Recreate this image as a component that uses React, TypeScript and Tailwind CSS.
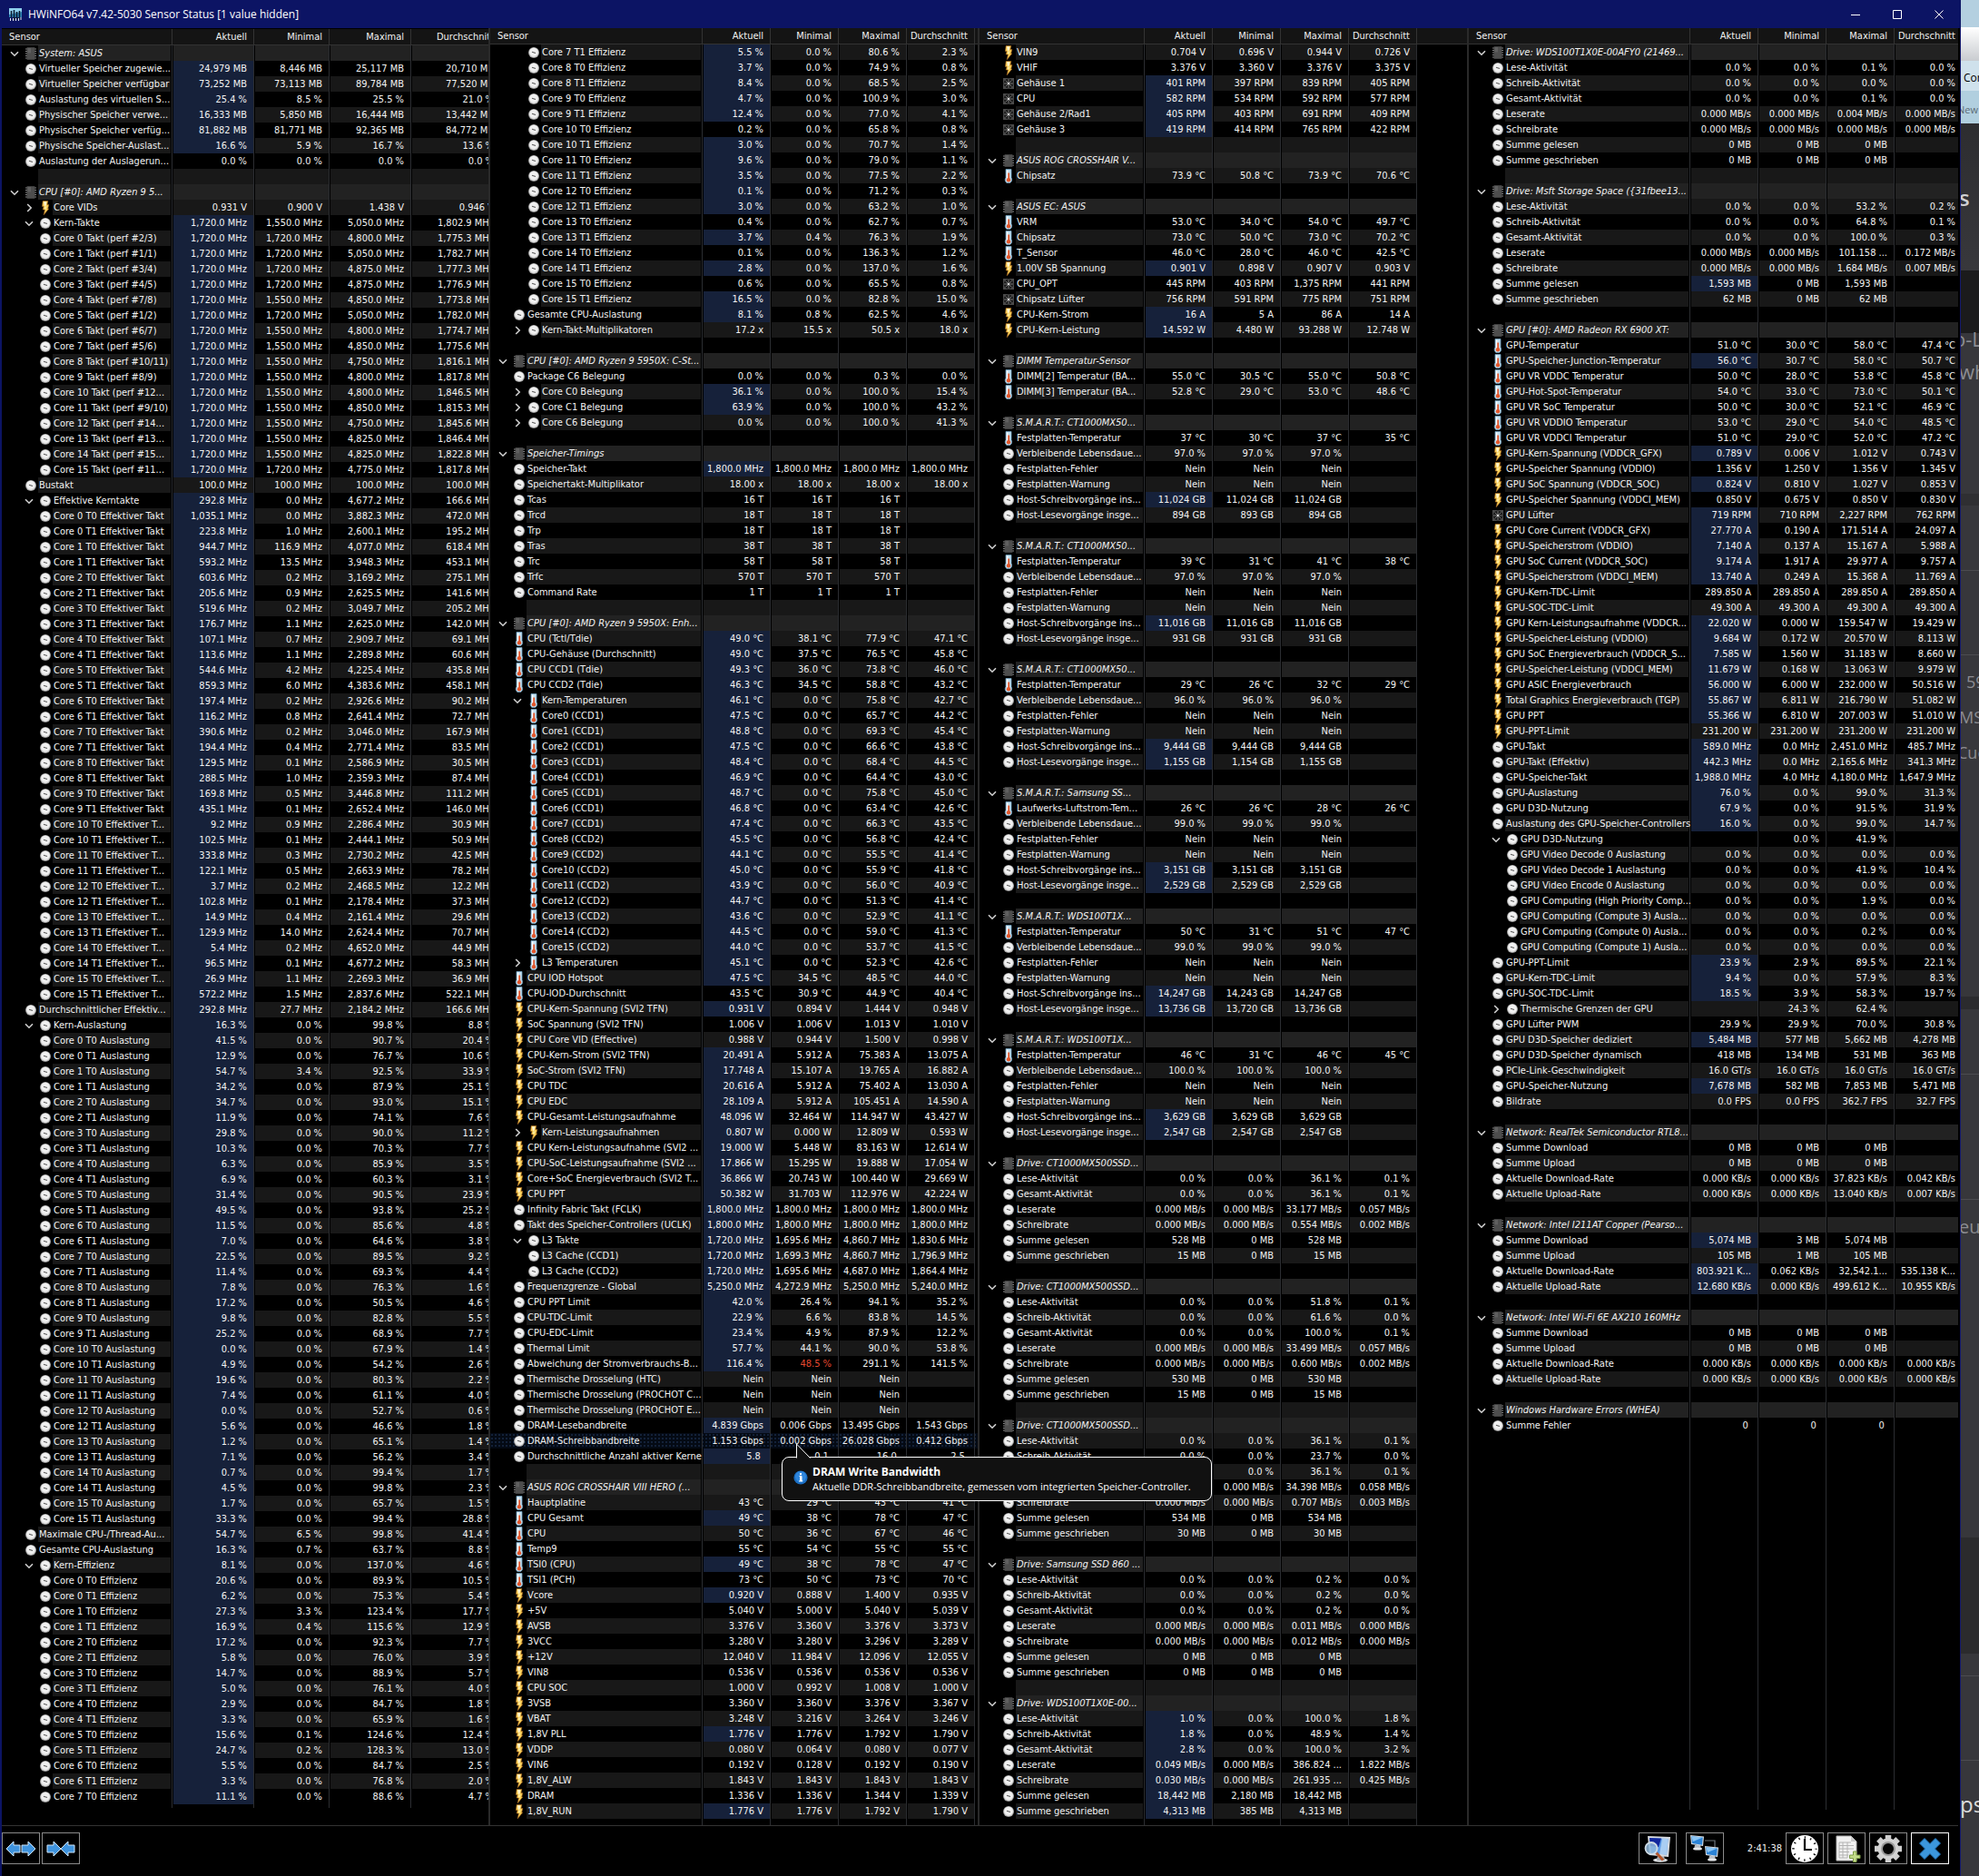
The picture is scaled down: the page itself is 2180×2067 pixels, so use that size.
import { clsx } from "clsx";
import type { ReactNode } from "react";

// ── Sensor data ────────────────────────────────────────────────────────────
//
// One line per row: kind + level + expander | name | unit | current | min | max | avg
//   kind      h = group, g = gauge, t = temperature, b = power, f = fan
//   expander  v = open, > = closed
//   value     leading * = changed since last poll, leading ! = alert
// An empty line is a spacer row.

const SYSTEM = `
h0v|System: ASUS
g0|Virtueller Speicher zugewie...|MB|*24,979|8,446|25,117|20,710
g0|Virtueller Speicher verfügbar|MB|*73,252|73,113|89,784|77,520
g0|Auslastung des virtuellen S...|%|*25.4|8.5|25.5|21.0
g0|Physischer Speicher verwe...|MB|*16,333|5,850|16,444|13,442
g0|Physischer Speicher verfüg...|MB|*81,882|81,771|92,365|84,772
g0|Physische Speicher-Auslast...|%|*16.6|5.9|16.7|13.6
g0|Auslastung der Auslagerun...|%|0.0|0.0|0.0|0.0

h0v|CPU [#0]: AMD Ryzen 9 5...
b1>|Core VIDs|V|0.931|0.900|1.438|0.946
g1v|Kern-Takte|MHz|*1,720.0|1,550.0|5,050.0|1,802.9
g1|Core 0 Takt (perf #2/3)|MHz|*1,720.0|1,720.0|4,800.0|1,775.3
g1|Core 1 Takt (perf #1/1)|MHz|*1,720.0|1,720.0|5,050.0|1,782.7
g1|Core 2 Takt (perf #3/4)|MHz|*1,720.0|1,720.0|4,875.0|1,777.3
g1|Core 3 Takt (perf #4/5)|MHz|*1,720.0|1,720.0|4,875.0|1,776.9
g1|Core 4 Takt (perf #7/8)|MHz|*1,720.0|1,550.0|4,850.0|1,773.8
g1|Core 5 Takt (perf #1/2)|MHz|*1,720.0|1,720.0|5,050.0|1,782.0
g1|Core 6 Takt (perf #6/7)|MHz|*1,720.0|1,550.0|4,800.0|1,774.7
g1|Core 7 Takt (perf #5/6)|MHz|*1,720.0|1,550.0|4,850.0|1,775.6
g1|Core 8 Takt (perf #10/11)|MHz|*1,720.0|1,550.0|4,750.0|1,816.1
g1|Core 9 Takt (perf #8/9)|MHz|*1,720.0|1,550.0|4,800.0|1,817.8
g1|Core 10 Takt (perf #12...|MHz|*1,720.0|1,550.0|4,800.0|1,846.5
g1|Core 11 Takt (perf #9/10)|MHz|*1,720.0|1,550.0|4,850.0|1,815.3
g1|Core 12 Takt (perf #14...|MHz|*1,720.0|1,550.0|4,750.0|1,845.6
g1|Core 13 Takt (perf #13...|MHz|*1,720.0|1,550.0|4,825.0|1,846.4
g1|Core 14 Takt (perf #15...|MHz|*1,720.0|1,550.0|4,825.0|1,822.8
g1|Core 15 Takt (perf #11...|MHz|*1,720.0|1,720.0|4,775.0|1,817.8
g0|Bustakt|MHz|100.0|100.0|100.0|100.0
g1v|Effektive Kerntakte|MHz|*292.8|0.0|4,677.2|166.6
g1|Core 0 T0 Effektiver Takt|MHz|*1,035.1|0.0|3,882.3|472.0
g1|Core 0 T1 Effektiver Takt|MHz|*223.8|1.0|2,600.1|195.2
g1|Core 1 T0 Effektiver Takt|MHz|*944.7|116.9|4,077.0|618.4
g1|Core 1 T1 Effektiver Takt|MHz|*593.2|13.5|3,948.3|453.1
g1|Core 2 T0 Effektiver Takt|MHz|*603.6|0.2|3,169.2|275.1
g1|Core 2 T1 Effektiver Takt|MHz|*205.6|0.9|2,625.5|141.6
g1|Core 3 T0 Effektiver Takt|MHz|*519.6|0.2|3,049.7|205.2
g1|Core 3 T1 Effektiver Takt|MHz|*176.7|1.1|2,625.0|142.0
g1|Core 4 T0 Effektiver Takt|MHz|*107.1|0.7|2,909.7|69.1
g1|Core 4 T1 Effektiver Takt|MHz|*113.6|1.1|2,289.8|60.6
g1|Core 5 T0 Effektiver Takt|MHz|*544.6|4.2|4,225.4|435.8
g1|Core 5 T1 Effektiver Takt|MHz|*859.3|6.0|4,383.6|458.1
g1|Core 6 T0 Effektiver Takt|MHz|*197.4|0.2|2,926.6|90.2
g1|Core 6 T1 Effektiver Takt|MHz|*116.2|0.8|2,641.4|72.7
g1|Core 7 T0 Effektiver Takt|MHz|*390.6|0.2|3,046.0|167.9
g1|Core 7 T1 Effektiver Takt|MHz|*194.4|0.4|2,771.4|83.5
g1|Core 8 T0 Effektiver Takt|MHz|*129.5|0.1|2,586.9|30.5
g1|Core 8 T1 Effektiver Takt|MHz|*288.5|1.0|2,359.3|87.4
g1|Core 9 T0 Effektiver Takt|MHz|*169.8|0.5|3,446.8|111.2
g1|Core 9 T1 Effektiver Takt|MHz|*435.1|0.1|2,652.4|146.0
g1|Core 10 T0 Effektiver T...|MHz|*9.2|0.9|2,286.4|30.9
g1|Core 10 T1 Effektiver T...|MHz|*102.5|0.1|2,444.1|50.9
g1|Core 11 T0 Effektiver T...|MHz|*333.8|0.3|2,730.2|42.5
g1|Core 11 T1 Effektiver T...|MHz|*122.1|0.5|2,663.9|78.2
g1|Core 12 T0 Effektiver T...|MHz|*3.7|0.2|2,468.5|12.2
g1|Core 12 T1 Effektiver T...|MHz|*102.8|0.1|2,178.4|37.3
g1|Core 13 T0 Effektiver T...|MHz|*14.9|0.4|2,161.4|29.6
g1|Core 13 T1 Effektiver T...|MHz|*129.9|14.0|2,624.4|70.7
g1|Core 14 T0 Effektiver T...|MHz|*5.4|0.2|4,652.0|44.9
g1|Core 14 T1 Effektiver T...|MHz|*96.5|0.1|4,677.2|58.3
g1|Core 15 T0 Effektiver T...|MHz|*26.9|1.1|2,269.3|36.9
g1|Core 15 T1 Effektiver T...|MHz|*572.2|1.5|2,837.6|522.1
g0|Durchschnittlicher Effektiv...|MHz|*292.8|27.7|2,184.2|166.6
g1v|Kern-Auslastung|%|*16.3|0.0|99.8|8.8
g1|Core 0 T0 Auslastung|%|*41.5|0.0|90.7|20.4
g1|Core 0 T1 Auslastung|%|*12.9|0.0|76.7|10.6
g1|Core 1 T0 Auslastung|%|*54.7|3.4|92.5|33.9
g1|Core 1 T1 Auslastung|%|*34.2|0.0|87.9|25.1
g1|Core 2 T0 Auslastung|%|*34.7|0.0|93.0|15.1
g1|Core 2 T1 Auslastung|%|*11.9|0.0|74.1|7.6
g1|Core 3 T0 Auslastung|%|*29.8|0.0|90.0|11.2
g1|Core 3 T1 Auslastung|%|*10.3|0.0|70.3|7.7
g1|Core 4 T0 Auslastung|%|*6.3|0.0|85.9|3.5
g1|Core 4 T1 Auslastung|%|*6.9|0.0|60.3|3.1
g1|Core 5 T0 Auslastung|%|*31.4|0.0|90.5|23.9
g1|Core 5 T1 Auslastung|%|*49.5|0.0|93.8|25.2
g1|Core 6 T0 Auslastung|%|*11.5|0.0|85.6|4.8
g1|Core 6 T1 Auslastung|%|*7.0|0.0|64.6|3.8
g1|Core 7 T0 Auslastung|%|*22.5|0.0|89.5|9.2
g1|Core 7 T1 Auslastung|%|*11.4|0.0|69.3|4.4
g1|Core 8 T0 Auslastung|%|*7.8|0.0|76.3|1.6
g1|Core 8 T1 Auslastung|%|*17.2|0.0|50.5|4.6
g1|Core 9 T0 Auslastung|%|*9.8|0.0|82.8|5.5
g1|Core 9 T1 Auslastung|%|*25.2|0.0|68.9|7.7
g1|Core 10 T0 Auslastung|%|*0.0|0.0|67.9|1.4
g1|Core 10 T1 Auslastung|%|*4.9|0.0|54.2|2.6
g1|Core 11 T0 Auslastung|%|*19.6|0.0|80.3|2.2
g1|Core 11 T1 Auslastung|%|*7.4|0.0|61.1|4.0
g1|Core 12 T0 Auslastung|%|*0.0|0.0|52.7|0.6
g1|Core 12 T1 Auslastung|%|*5.6|0.0|46.6|1.8
g1|Core 13 T0 Auslastung|%|*1.2|0.0|65.1|1.4
g1|Core 13 T1 Auslastung|%|*7.1|0.0|56.2|3.4
g1|Core 14 T0 Auslastung|%|*0.7|0.0|99.4|1.7
g1|Core 14 T1 Auslastung|%|*4.5|0.0|99.8|2.3
g1|Core 15 T0 Auslastung|%|*1.7|0.0|65.7|1.5
g1|Core 15 T1 Auslastung|%|*33.3|0.0|99.4|28.8
g0|Maximale CPU-/Thread-Au...|%|*54.7|6.5|99.8|41.4
g0|Gesamte CPU-Auslastung|%|*16.3|0.7|63.7|8.8
g1v|Kern-Effizienz|%|*8.1|0.0|137.0|4.6
g1|Core 0 T0 Effizienz|%|*20.6|0.0|89.9|10.5
g1|Core 0 T1 Effizienz|%|*6.2|0.0|75.3|5.4
g1|Core 1 T0 Effizienz|%|*27.3|3.3|123.4|17.7
g1|Core 1 T1 Effizienz|%|*16.9|0.4|115.6|12.9
g1|Core 2 T0 Effizienz|%|*17.2|0.0|92.3|7.7
g1|Core 2 T1 Effizienz|%|*5.8|0.0|76.0|3.9
g1|Core 3 T0 Effizienz|%|*14.7|0.0|88.9|5.7
g1|Core 3 T1 Effizienz|%|*5.0|0.0|76.1|4.0
g1|Core 4 T0 Effizienz|%|*2.9|0.0|84.7|1.8
g1|Core 4 T1 Effizienz|%|*3.3|0.0|65.9|1.6
g1|Core 5 T0 Effizienz|%|*15.6|0.1|124.6|12.4
g1|Core 5 T1 Effizienz|%|*24.7|0.2|128.3|13.0
g1|Core 6 T0 Effizienz|%|*5.5|0.0|84.7|2.5
g1|Core 6 T1 Effizienz|%|*3.3|0.0|76.8|2.0
g1|Core 7 T0 Effizienz|%|*11.1|0.0|88.6|4.7
`;

const CPU = `
g1|Core 7 T1 Effizienz|%|*5.5|0.0|80.6|2.3
g1|Core 8 T0 Effizienz|%|*3.7|0.0|74.9|0.8
g1|Core 8 T1 Effizienz|%|*8.4|0.0|68.5|2.5
g1|Core 9 T0 Effizienz|%|*4.7|0.0|100.9|3.0
g1|Core 9 T1 Effizienz|%|*12.4|0.0|77.0|4.1
g1|Core 10 T0 Effizienz|%|0.2|0.0|65.8|0.8
g1|Core 10 T1 Effizienz|%|*3.0|0.0|70.7|1.4
g1|Core 11 T0 Effizienz|%|*9.6|0.0|79.0|1.1
g1|Core 11 T1 Effizienz|%|*3.5|0.0|77.5|2.2
g1|Core 12 T0 Effizienz|%|*0.1|0.0|71.2|0.3
g1|Core 12 T1 Effizienz|%|*3.0|0.0|63.2|1.0
g1|Core 13 T0 Effizienz|%|0.4|0.0|62.7|0.7
g1|Core 13 T1 Effizienz|%|*3.7|0.4|76.3|1.9
g1|Core 14 T0 Effizienz|%|0.1|0.0|136.3|1.2
g1|Core 14 T1 Effizienz|%|*2.8|0.0|137.0|1.6
g1|Core 15 T0 Effizienz|%|0.6|0.0|65.5|0.8
g1|Core 15 T1 Effizienz|%|*16.5|0.0|82.8|15.0
g0|Gesamte CPU-Auslastung|%|*8.1|0.8|62.5|4.6
g1>|Kern-Takt-Multiplikatoren|x|17.2|15.5|50.5|18.0

h0v|CPU [#0]: AMD Ryzen 9 5950X: C-St...
g0|Package C6 Belegung|%|0.0|0.0|0.3|0.0
g1>|Core C0 Belegung|%|*36.1|0.0|100.0|15.4
g1>|Core C1 Belegung|%|*63.9|0.0|100.0|43.2
g1>|Core C6 Belegung|%|0.0|0.0|100.0|41.3

h0v|Speicher-Timings
g0|Speicher-Takt|MHz|*1,800.0|1,800.0|1,800.0|1,800.0
g0|Speichertakt-Multiplikator|x|18.00|18.00|18.00|18.00
g0|Tcas|T|16|16|16|
g0|Trcd|T|18|18|18|
g0|Trp|T|18|18|18|
g0|Tras|T|38|38|38|
g0|Trc|T|58|58|58|
g0|Trfc|T|570|570|570|
g0|Command Rate|T|1|1|1|

h0v|CPU [#0]: AMD Ryzen 9 5950X: Enh...
t0|CPU (Tctl/Tdie)|°C|*49.0|38.1|77.9|47.1
t0|CPU-Gehäuse (Durchschnitt)|°C|*49.0|37.5|76.5|45.8
t0|CPU CCD1 (Tdie)|°C|*49.3|36.0|73.8|46.0
t0|CPU CCD2 (Tdie)|°C|*46.3|34.5|58.8|43.2
t1v|Kern-Temperaturen|°C|*46.1|0.0|75.8|42.7
t1|Core0 (CCD1)|°C|*47.5|0.0|65.7|44.2
t1|Core1 (CCD1)|°C|*48.8|0.0|69.3|45.4
t1|Core2 (CCD1)|°C|*47.5|0.0|66.6|43.8
t1|Core3 (CCD1)|°C|*48.4|0.0|68.4|44.5
t1|Core4 (CCD1)|°C|*46.9|0.0|64.4|43.0
t1|Core5 (CCD1)|°C|*48.7|0.0|75.8|45.0
t1|Core6 (CCD1)|°C|*46.8|0.0|63.4|42.6
t1|Core7 (CCD1)|°C|*47.4|0.0|66.3|43.5
t1|Core8 (CCD2)|°C|*45.5|0.0|56.8|42.4
t1|Core9 (CCD2)|°C|*44.1|0.0|55.5|41.4
t1|Core10 (CCD2)|°C|*45.0|0.0|55.9|41.8
t1|Core11 (CCD2)|°C|*43.9|0.0|56.0|40.9
t1|Core12 (CCD2)|°C|*44.7|0.0|51.3|41.4
t1|Core13 (CCD2)|°C|*43.6|0.0|52.9|41.1
t1|Core14 (CCD2)|°C|*44.5|0.0|59.0|41.3
t1|Core15 (CCD2)|°C|*44.0|0.0|53.7|41.5
t1>|L3 Temperaturen|°C|*45.1|0.0|52.3|42.6
t0|CPU IOD Hotspot|°C|*47.5|34.5|48.5|44.0
t0|CPU-IOD-Durchschnitt|°C|43.5|30.9|44.9|40.4
b0|CPU-Kern-Spannung (SVI2 TFN)|V|*0.931|0.894|1.444|0.948
b0|SoC Spannung (SVI2 TFN)|V|1.006|1.006|1.013|1.010
b0|CPU Core VID (Effective)|V|0.988|0.944|1.500|0.998
b0|CPU-Kern-Strom (SVI2 TFN)|A|*20.491|5.912|75.383|13.075
b0|SoC-Strom (SVI2 TFN)|A|*17.748|15.107|19.765|16.882
b0|CPU TDC|A|*20.616|5.912|75.402|13.030
b0|CPU EDC|A|*28.109|5.912|105.451|14.590
b0|CPU-Gesamt-Leistungsaufnahme|W|*48.096|32.464|114.947|43.427
b1>|Kern-Leistungsaufnahmen|W|*0.807|0.000|12.809|0.593
b0|CPU Kern-Leistungsaufnahme (SVI2 ...|W|*19.000|5.448|83.163|12.614
b0|CPU-SoC-Leistungsaufnahme (SVI2 ...|W|*17.866|15.295|19.888|17.054
b0|Core+SoC Energieverbrauch (SVI2 T...|W|*36.866|20.743|100.440|29.669
b0|CPU PPT|W|*50.382|31.703|112.976|42.224
g0|Infinity Fabric Takt (FCLK)|MHz|*1,800.0|1,800.0|1,800.0|1,800.0
g0|Takt des Speicher-Controllers (UCLK)|MHz|*1,800.0|1,800.0|1,800.0|1,800.0
g1v|L3 Takte|MHz|*1,720.0|1,695.6|4,860.7|1,830.6
g1|L3 Cache (CCD1)|MHz|*1,720.0|1,699.3|4,860.7|1,796.9
g1|L3 Cache (CCD2)|MHz|*1,720.0|1,695.6|4,687.0|1,864.4
g0|Frequenzgrenze - Global|MHz|*5,250.0|4,272.9|5,250.0|5,240.0
g0|CPU PPT Limit|%|*42.0|26.4|94.1|35.2
g0|CPU-TDC-Limit|%|*22.9|6.6|83.8|14.5
g0|CPU-EDC-Limit|%|*23.4|4.9|87.9|12.2
g0|Thermal Limit|%|*57.7|44.1|90.0|53.8
g0|Abweichung der Stromverbrauchs-B...|%|*116.4|!48.5|291.1|141.5
g0|Thermische Drosselung (HTC)||Nein|Nein|Nein|
g0|Thermische Drosselung (PROCHOT C...||Nein|Nein|Nein|
g0|Thermische Drosselung (PROCHOT E...||Nein|Nein|Nein|
g0|DRAM-Lesebandbreite|Gbps|*4.839|0.006|13.495|1.543
g0|DRAM-Schreibbandbreite|Gbps|1.153|0.002|26.028|0.412
g0|Durchschnittliche Anzahl aktiver Kerne| |*5.8|0.1|16.0|2.5

h0v|ASUS ROG CROSSHAIR VIII HERO (...
t0|Hauptplatine|°C|43|29|43|41
t0|CPU Gesamt|°C|*49|38|78|47
t0|CPU|°C|50|36|67|46
t0|Temp9|°C|55|54|55|55
t0|TSI0 (CPU)|°C|*49|38|78|47
t0|TSI1 (PCH)|°C|73|50|73|70
b0|Vcore|V|*0.920|0.888|1.400|0.935
b0|+5V|V|5.040|5.000|5.040|5.039
b0|AVSB|V|3.376|3.360|3.376|3.373
b0|3VCC|V|3.280|3.280|3.296|3.289
b0|+12V|V|12.040|11.984|12.096|12.055
b0|VIN8|V|0.536|0.536|0.536|0.536
b0|CPU SOC|V|1.000|0.992|1.008|1.000
b0|3VSB|V|3.360|3.360|3.376|3.367
b0|VBAT|V|3.248|3.216|3.264|3.246
b0|1,8V PLL|V|*1.776|1.776|1.792|1.790
b0|VDDP|V|0.080|0.064|0.080|0.077
b0|VIN6|V|0.192|0.128|0.192|0.190
b0|1,8V_ALW|V|1.843|1.843|1.843|1.843
b0|DRAM|V|1.336|1.336|1.344|1.339
b0|1,8V_RUN|V|*1.776|1.776|1.792|1.790
`;

const BOARD = `
b0|VIN9|V|0.704|0.696|0.944|0.726
b0|VHIF|V|3.376|3.360|3.376|3.375
f0|Gehäuse 1|RPM|*401|397|839|405
f0|CPU|RPM|*582|534|592|577
f0|Gehäuse 2/Rad1|RPM|*405|403|691|409
f0|Gehäuse 3|RPM|*419|414|765|422

h0v|ASUS ROG CROSSHAIR V...
t0|Chipsatz|°C|73.9|50.8|73.9|70.6

h0v|ASUS EC: ASUS
t0|VRM|°C|53.0|34.0|54.0|49.7
t0|Chipsatz|°C|73.0|50.0|73.0|70.2
t0|T_Sensor|°C|46.0|28.0|46.0|42.5
b0|1.00V SB Spannung|V|*0.901|0.898|0.907|0.903
f0|CPU_OPT|RPM|445|403|1,375|441
f0|Chipsatz Lüfter|RPM|756|591|775|751
b0|CPU-Kern-Strom|A|*16|5|86|14
b0|CPU-Kern-Leistung|W|*14.592|4.480|93.288|12.748

h0v|DIMM Temperatur-Sensor
t0|DIMM[2] Temperatur (BA...|°C|55.0|30.5|55.0|50.8
t0|DIMM[3] Temperatur (BA...|°C|52.8|29.0|53.0|48.6

h0v|S.M.A.R.T.: CT1000MX50...
t0|Festplatten-Temperatur|°C|37|30|37|35
g0|Verbleibende Lebensdaue...|%|97.0|97.0|97.0|
g0|Festplatten-Fehler||Nein|Nein|Nein|
g0|Festplatten-Warnung||Nein|Nein|Nein|
g0|Host-Schreibvorgänge ins...|GB|*11,024|11,024|11,024|
g0|Host-Lesevorgänge insge...|GB|894|893|894|

h0v|S.M.A.R.T.: CT1000MX50...
t0|Festplatten-Temperatur|°C|39|31|41|38
g0|Verbleibende Lebensdaue...|%|97.0|97.0|97.0|
g0|Festplatten-Fehler||Nein|Nein|Nein|
g0|Festplatten-Warnung||Nein|Nein|Nein|
g0|Host-Schreibvorgänge ins...|GB|*11,016|11,016|11,016|
g0|Host-Lesevorgänge insge...|GB|931|931|931|

h0v|S.M.A.R.T.: CT1000MX50...
t0|Festplatten-Temperatur|°C|29|26|32|29
g0|Verbleibende Lebensdaue...|%|96.0|96.0|96.0|
g0|Festplatten-Fehler||Nein|Nein|Nein|
g0|Festplatten-Warnung||Nein|Nein|Nein|
g0|Host-Schreibvorgänge ins...|GB|*9,444|9,444|9,444|
g0|Host-Lesevorgänge insge...|GB|*1,155|1,154|1,155|

h0v|S.M.A.R.T.: Samsung SS...
t0|Laufwerks-Luftstrom-Tem...|°C|26|26|28|26
g0|Verbleibende Lebensdaue...|%|99.0|99.0|99.0|
g0|Festplatten-Fehler||Nein|Nein|Nein|
g0|Festplatten-Warnung||Nein|Nein|Nein|
g0|Host-Schreibvorgänge ins...|GB|*3,151|3,151|3,151|
g0|Host-Lesevorgänge insge...|GB|*2,529|2,529|2,529|

h0v|S.M.A.R.T.: WDS100T1X...
t0|Festplatten-Temperatur|°C|50|31|51|47
g0|Verbleibende Lebensdaue...|%|99.0|99.0|99.0|
g0|Festplatten-Fehler||Nein|Nein|Nein|
g0|Festplatten-Warnung||Nein|Nein|Nein|
g0|Host-Schreibvorgänge ins...|GB|*14,247|14,243|14,247|
g0|Host-Lesevorgänge insge...|GB|*13,736|13,720|13,736|

h0v|S.M.A.R.T.: WDS100T1X...
t0|Festplatten-Temperatur|°C|46|31|46|45
g0|Verbleibende Lebensdaue...|%|100.0|100.0|100.0|
g0|Festplatten-Fehler||Nein|Nein|Nein|
g0|Festplatten-Warnung||Nein|Nein|Nein|
g0|Host-Schreibvorgänge ins...|GB|*3,629|3,629|3,629|
g0|Host-Lesevorgänge insge...|GB|*2,547|2,547|2,547|

h0v|Drive: CT1000MX500SSD...
g0|Lese-Aktivität|%|0.0|0.0|36.1|0.1
g0|Gesamt-Aktivität|%|0.0|0.0|36.1|0.1
g0|Leserate|MB/s|0.000|0.000|33.177|0.057
g0|Schreibrate|MB/s|0.000|0.000|0.554|0.002
g0|Summe gelesen|MB|528|0|528|
g0|Summe geschrieben|MB|15|0|15|

h0v|Drive: CT1000MX500SSD...
g0|Lese-Aktivität|%|0.0|0.0|51.8|0.1
g0|Schreib-Aktivität|%|0.0|0.0|61.6|0.0
g0|Gesamt-Aktivität|%|0.0|0.0|100.0|0.1
g0|Leserate|MB/s|0.000|0.000|33.499|0.057
g0|Schreibrate|MB/s|0.000|0.000|0.600|0.002
g0|Summe gelesen|MB|530|0|530|
g0|Summe geschrieben|MB|15|0|15|

h0v|Drive: CT1000MX500SSD...
g0|Lese-Aktivität|%|0.0|0.0|36.1|0.1
g0|Schreib-Aktivität|%|0.0|0.0|23.7|0.0
g0|Gesamt-Aktivität|%|0.0|0.0|36.1|0.1
g0|Leserate|MB/s|0.000|0.000|34.398|0.058
g0|Schreibrate|MB/s|0.000|0.000|0.707|0.003
g0|Summe gelesen|MB|534|0|534|
g0|Summe geschrieben|MB|30|0|30|

h0v|Drive: Samsung SSD 860 ...
g0|Lese-Aktivität|%|0.0|0.0|0.2|0.0
g0|Schreib-Aktivität|%|0.0|0.0|0.2|0.0
g0|Gesamt-Aktivität|%|0.0|0.0|0.2|0.0
g0|Leserate|MB/s|0.000|0.000|0.011|0.000
g0|Schreibrate|MB/s|0.000|0.000|0.012|0.000
g0|Summe gelesen|MB|0|0|0|
g0|Summe geschrieben|MB|0|0|0|

h0v|Drive: WDS100T1X0E-00...
g0|Lese-Aktivität|%|*1.0|0.0|100.0|1.8
g0|Schreib-Aktivität|%|*1.8|0.0|48.9|1.4
g0|Gesamt-Aktivität|%|*2.8|0.0|100.0|3.2
g0|Leserate|MB/s|*0.049|0.000|386.824 ...|1.822
g0|Schreibrate|MB/s|*0.030|0.000|261.935 ...|0.425
g0|Summe gelesen|MB|*18,442|2,180|18,442|
g0|Summe geschrieben|MB|*4,313|385|4,313|
`;

const GPU = `
h0v|Drive: WDS100T1X0E-00AFY0 (21469...
g0|Lese-Aktivität|%|0.0|0.0|0.1|0.0
g0|Schreib-Aktivität|%|0.0|0.0|0.0|0.0
g0|Gesamt-Aktivität|%|0.0|0.0|0.1|0.0
g0|Leserate|MB/s|0.000|0.000|0.004|0.000
g0|Schreibrate|MB/s|0.000|0.000|0.000|0.000
g0|Summe gelesen|MB|0|0|0|
g0|Summe geschrieben|MB|0|0|0|

h0v|Drive: Msft Storage Space ({31fbee13...
g0|Lese-Aktivität|%|0.0|0.0|53.2|0.2
g0|Schreib-Aktivität|%|0.0|0.0|64.8|0.1
g0|Gesamt-Aktivität|%|0.0|0.0|100.0|0.3
g0|Leserate|MB/s|0.000|0.000|101.158 ...|0.172
g0|Schreibrate|MB/s|0.000|0.000|1.684|0.007
g0|Summe gelesen|MB|*1,593|0|1,593|
g0|Summe geschrieben|MB|62|0|62|

h0v|GPU [#0]: AMD Radeon RX 6900 XT:
t0|GPU-Temperatur|°C|51.0|30.0|58.0|47.4
t0|GPU-Speicher-Junction-Temperatur|°C|*56.0|30.7|58.0|50.7
t0|GPU VR VDDC Temperatur|°C|50.0|28.0|53.8|45.8
t0|GPU-Hot-Spot-Temperatur|°C|54.0|33.0|73.0|50.1
t0|GPU VR SoC Temperatur|°C|50.0|30.0|52.1|46.9
t0|GPU VR VDDIO Temperatur|°C|53.0|29.0|54.0|48.5
t0|GPU VR VDDCI Temperatur|°C|51.0|29.0|52.0|47.2
b0|GPU-Kern-Spannung (VDDCR_GFX)|V|*0.789|0.006|1.012|0.743
b0|GPU-Speicher Spannung (VDDIO)|V|1.356|1.250|1.356|1.345
b0|GPU SoC Spannung (VDDCR_SOC)|V|*0.824|0.810|1.027|0.853
b0|GPU-Speicher Spannung (VDDCI_MEM)|V|0.850|0.675|0.850|0.830
f0|GPU Lüfter|RPM|*719|710|2,227|762
b0|GPU Core Current (VDDCR_GFX)|A|*27.770|0.190|171.514|24.097
b0|GPU-Speicherstrom (VDDIO)|A|*7.140|0.137|15.167|5.988
b0|GPU SoC Current (VDDCR_SOC)|A|*9.174|1.917|29.977|9.757
b0|GPU-Speicherstrom (VDDCI_MEM)|A|*13.740|0.249|15.368|11.769
b0|GPU-Kern-TDC-Limit|A|289.850|289.850|289.850|289.850
b0|GPU-SOC-TDC-Limit|A|49.300|49.300|49.300|49.300
b0|GPU Kern-Leistungsaufnahme (VDDCR...|W|*22.020|0.000|159.547|19.429
b0|GPU-Speicher-Leistung (VDDIO)|W|*9.684|0.172|20.570|8.113
b0|GPU SoC Energieverbrauch (VDDCR_S...|W|*7.585|1.560|31.183|8.660
b0|GPU-Speicher-Leistung (VDDCI_MEM)|W|*11.679|0.168|13.063|9.979
b0|GPU ASIC Energieverbrauch|W|*56.000|6.000|232.000|50.516
b0|Total Graphics Energieverbrauch (TGP)|W|*55.867|6.811|216.790|51.082
b0|GPU PPT|W|*55.366|6.810|207.003|51.010
b0|GPU-PPT-Limit|W|231.200|231.200|231.200|231.200
g0|GPU-Takt|MHz|*589.0|0.0|2,451.0|485.7
g0|GPU-Takt (Effektiv)|MHz|*442.3|0.0|2,165.6|341.3
g0|GPU-Speicher-Takt|MHz|*1,988.0|4.0|4,180.0|1,647.9
g0|GPU-Auslastung|%|*76.0|0.0|99.0|31.3
g0|GPU D3D-Nutzung|%|*67.9|0.0|91.5|31.9
g0|Auslastung des GPU-Speicher-Controllers|%|*16.0|0.0|99.0|14.7
g1v|GPU D3D-Nutzung|%||0.0|41.9|
g1|GPU Video Decode 0 Auslastung|%|0.0|0.0|0.0|0.0
g1|GPU Video Decode 1 Auslastung|%|0.0|0.0|41.9|10.4
g1|GPU Video Encode 0 Auslastung|%|0.0|0.0|0.0|0.0
g1|GPU Computing (High Priority Comp...|%|0.0|0.0|1.9|0.0
g1|GPU Computing (Compute 3) Ausla...|%|0.0|0.0|0.0|0.0
g1|GPU Computing (Compute 0) Ausla...|%|0.0|0.0|0.2|0.0
g1|GPU Computing (Compute 1) Ausla...|%|0.0|0.0|0.0|0.0
g0|GPU-PPT-Limit|%|*23.9|2.9|89.5|22.1
g0|GPU-Kern-TDC-Limit|%|*9.4|0.0|57.9|8.3
g0|GPU-SOC-TDC-Limit|%|*18.5|3.9|58.3|19.7
g1>|Thermische Grenzen der GPU|%||24.3|62.4|
g0|GPU Lüfter PWM|%|29.9|29.9|70.0|30.8
g0|GPU D3D-Speicher dediziert|MB|*5,484|577|5,662|4,278
g0|GPU D3D-Speicher dynamisch|MB|418|134|531|363
g0|PCIe-Link-Geschwindigkeit|GT/s|16.0|16.0|16.0|16.0
g0|GPU-Speicher-Nutzung|MB|*7,678|582|7,853|5,471
g0|Bildrate|FPS|0.0|0.0|362.7|32.7

h0v|Network: RealTek Semiconductor RTL8...
g0|Summe Download|MB|0|0|0|
g0|Summe Upload|MB|0|0|0|
g0|Aktuelle Download-Rate|KB/s|0.000|0.000|37.823|0.042
g0|Aktuelle Upload-Rate|KB/s|0.000|0.000|13.040|0.007

h0v|Network: Intel I211AT Copper (Pearso...
g0|Summe Download|MB|*5,074|3|5,074|
g0|Summe Upload|MB|105|1|105|
g0|Aktuelle Download-Rate|KB/s|*803.921 K...|0.062|32,542.1...|535.138 K...
g0|Aktuelle Upload-Rate|KB/s|*12.680|0.000|499.612 K...|10.955

h0v|Network: Intel Wi-Fi 6E AX210 160MHz
g0|Summe Download|MB|0|0|0|
g0|Summe Upload|MB|0|0|0|
g0|Aktuelle Download-Rate|KB/s|0.000|0.000|0.000|0.000
g0|Aktuelle Upload-Rate|KB/s|0.000|0.000|0.000|0.000

h0v|Windows Hardware Errors (WHEA)
g0|Summe Fehler| |0|0|0|
`;

type Value = { text: string; changed: boolean; alert: boolean };

type Row = {
  kind: string;
  level: number;
  expander: string;
  name: string;
  values: Value[];
};

function parseValue(raw: string, unit: string): Value {
  const changed = raw.startsWith("*");
  const alert = raw.startsWith("!");
  const num = changed || alert ? raw.slice(1) : raw;
  const bare = !num || !unit || num.endsWith("...");
  return { text: bare ? num : `${num} ${unit.trim()}`, changed, alert };
}

function parseRows(source: string): Row[] {
  return source
    .slice(1, -1)
    .split("\n")
    .map((line) => {
      const [head, name = "", unit = "", ...rest] = line.split("|");
      return {
        kind: head[0] ?? "",
        level: Number(head[1] ?? 0),
        expander: head[2] ?? "",
        name,
        values: [0, 1, 2, 3].map((i) => parseValue(rest[i] ?? "", unit)),
      };
    });
}

const HOVERED = "DRAM-Schreibbandbreite";

// ── Row icons ──────────────────────────────────────────────────────────────

function GaugeIcon() {
  return (
    <svg viewBox="0 0 16 16" className="size-4">
      <circle cx="8" cy="8" r="6" fill="#9a9a9a" />
      <circle cx="8" cy="7.8" r="5.2" fill="#dedede" />
      <circle cx="8" cy="7.4" r="4.4" fill="#f0f0f0" />
      <path d="M6 7.2 10 8.6" stroke="#5c5c5c" strokeWidth="1.1" />
    </svg>
  );
}

function ThermoIcon() {
  return (
    <svg viewBox="0 0 16 16" className="size-4">
      <path
        d="M5 .5h6v9.300a4 4 0 0 1-1.500 5.700h-3.500A4 4 0 0 1 5 9.800z"
        fill="#c3e0f0"
        stroke="#6d9dbb"
        strokeWidth=".8"
      />
      <path d="M6.600 1.500v9" stroke="#fff" strokeWidth="1.400" />
      <path d="M8.200 4.500v8" stroke="#e2562b" strokeWidth="1.800" />
      <circle cx="8" cy="12.300" r="2.200" fill="#e2562b" />
    </svg>
  );
}

function BoltIcon() {
  return (
    <svg viewBox="0 0 16 16" className="size-4">
      <path
        d="M5.2 .4h5.6L9.9 4.6h1.9L10.7 9h1L6.2 15.8 7.4 10H5.2l.9-3.6H4.4z"
        fill="#f8cf58"
        stroke="#a8641c"
        strokeWidth=".6"
      />
      <path d="M6 1.2h3.400L8.500 5.400 7 6z" fill="#fff6d2" />
      <path d="M7.400 6.500h2.200L8.400 9.500H7z" fill="#fdeea6" />
    </svg>
  );
}

function FanIcon() {
  return (
    <svg viewBox="0 0 16 16" className="size-4">
      <rect x="2" y="2" width="12" height="12" fill="#4a4a4a" />
      <circle cx="8" cy="8" r="5.400" fill="#1c1c1c" />
      <path
        d="M8 3v10M3 8h10M4.600 4.600l6.800 6.800M11.400 4.600l-6.800 6.800"
        stroke="#8a8a8a"
        strokeWidth=".8"
      />
      <circle cx="8" cy="8" r="1.200" fill="#d8d8d8" />
    </svg>
  );
}

function ChipIcon() {
  return (
    <svg viewBox="0 0 16 16" className="size-4">
      <path
        d="M2 3h12M2 5.5h12M2 8h12M2 10.5h12M2 13h12"
        stroke="#8a8a8a"
        strokeWidth="1"
      />
      <rect x="3.6" y="1.2" width="8.8" height="13.6" fill="#4d4d4d" />
      <rect x="4.4" y="2" width="3.6" height="5.4" fill="#5f5f5f" />
    </svg>
  );
}

function RowIcon({ kind }: { kind: string }) {
  if (kind === "h") return <ChipIcon />;
  if (kind === "t") return <ThermoIcon />;
  if (kind === "b") return <BoltIcon />;
  if (kind === "f") return <FanIcon />;
  return <GaugeIcon />;
}

function Expander({ open, name }: { open: boolean; name: string }) {
  return (
    <button
      type="button"
      aria-expanded={open}
      aria-label={name}
      className="flex h-4 w-5 items-center justify-center"
    >
      <svg viewBox="0 0 10 10" className="size-[10px]">
        <path
          d={open ? "M1 3.2 5 7.2 9 3.2" : "M3.2 1 7.2 5 3.2 9"}
          fill="none"
          stroke="#cfcfcf"
          strokeWidth="1.6"
        />
      </svg>
    </button>
  );
}

// ── Tooltip ────────────────────────────────────────────────────────────────

function Tooltip() {
  return (
    <div
      role="tooltip"
      className="absolute top-[26px] left-3 z-10 flex h-[49px] w-[474px] items-center gap-[5px] rounded-lg border border-white bg-[#111] pl-3 text-left"
    >
      <svg
        viewBox="0 0 16 17"
        className="absolute -top-4 left-[15px] h-[17px] w-4"
      >
        <path d="M.5 17V1L15.5 16.5V17z" fill="#111" />
        <path d="M.5 16.5V1L15.5 16.5" fill="none" stroke="#fff" />
      </svg>
      <svg viewBox="0 0 16 16" className="mb-1 size-4 shrink-0">
        <circle cx="8" cy="8" r="7.6" fill="#1b6ec2" />
        <circle cx="8" cy="7" r="6" fill="#2f86dc" />
        <rect x="7" y="3" width="2" height="2" fill="#fff" />
        <path d="M6.4 6.4H9v5h1M6 12h4.2" stroke="#fff" fill="none" />
        <rect x="7" y="6.4" width="2" height="5.6" fill="#fff" />
      </svg>
      <div className="pt-px font-['Open_Sans','Noto_Sans',sans-serif] text-[11px] leading-4 whitespace-nowrap text-white">
        <p className="text-[12px] font-bold">DRAM Write Bandwidth</p>
        <p>
          Aktuelle DDR-Schreibbandbreite, gemessen vom integrierten
          Speicher-Controller.
        </p>
      </div>
    </div>
  );
}

// ── Sensor table ───────────────────────────────────────────────────────────

const DOTS =
  "bg-[#040a14] bg-[radial-gradient(#132138_1px,transparent_1px)] bg-[size:4px_4px]";

function fillFor(row: Row, index: number) {
  if (row.kind === "h") return "bg-[#222]";
  return index % 2 === 0 ? "bg-[#181818]" : "bg-black";
}

function SensorRow({ row, index }: { row: Row; index: number }) {
  const hovered = row.name === HOVERED;
  const fill = hovered ? "" : fillFor(row, index);

  return (
    <tr className={clsx(hovered && DOTS)}>
      <td className="p-0">
        <div className="flex h-[17px] items-center pr-px">
          <div
            className={clsx(
              "flex shrink-0 justify-end",
              row.level === 1 ? "w-10" : "w-6",
            )}
          >
            {row.expander && (
              <Expander open={row.expander === "v"} name={row.name} />
            )}
          </div>
          <div className="w-4 shrink-0">
            {row.kind && <RowIcon kind={row.kind} />}
          </div>
          <div
            className={clsx(
              "h-[17px] min-w-0 flex-1 pt-px pl-px leading-4",
              row.kind === "h" && "italic",
              fill,
            )}
          >
            {row.name}
          </div>
        </div>
      </td>
      {row.values.map((value, i) => (
        <td
          key={i}
          className={clsx(
            "border-l border-[#2b2d31] p-0 pl-px",
            hovered && "relative",
          )}
        >
          <div
            className={clsx(
              "h-[17px] pt-px pr-[7px] text-right leading-4 whitespace-pre",
              value.changed ? "bg-[#16213a]" : fill,
              value.alert && "text-[#e5482f]",
            )}
          >
            {value.text}
          </div>
          {hovered && i === 1 && <Tooltip />}
        </td>
      ))}
      <td className="border-l border-[#2b2d31] p-0" />
    </tr>
  );
}

type PanelProps = {
  source: string;
  className?: string;
  tableClassName?: string;
  // widths of the four value columns and of the empty rest
  columns: string[];
  tail: string;
};

function SensorPanel({
  source,
  className,
  tableClassName,
  columns,
  tail,
}: PanelProps) {
  const head = "h-[18px] border-b border-[#333] p-0 font-normal";

  return (
    <section className={className}>
      <div className={tableClassName}>
        <table className="w-full table-fixed border-separate border-spacing-0">
          <colgroup>
            <col />
            {columns.map((width, i) => (
              <col key={i} className={width} />
            ))}
          </colgroup>
          <thead>
            <tr className="bg-[#141414]">
              <th className={clsx(head, "pl-2 text-left")}>Sensor</th>
              {["Aktuell", "Minimal", "Maximal", "Durchschnitt"].map((label) => (
                <th
                  key={label}
                  className={clsx(head, "border-l pr-[7px] text-right")}
                >
                  {label}
                </th>
              ))}
              <th className={clsx(head, "border-l")} />
            </tr>
          </thead>
          <tbody>
            {parseRows(source).map((row, i) => (
              <SensorRow key={i} row={row} index={i} />
            ))}
            <tr>
              <td className={clsx("p-0", tail)} />
              {columns.map((_, i) => (
                <td key={i} className="border-l border-[#2b2d31] p-0" />
              ))}
            </tr>
          </tbody>
        </table>
      </div>
    </section>
  );
}

// ── Title bar ──────────────────────────────────────────────────────────────

function TitleBar() {
  return (
    <header className="flex h-[31px] items-center bg-[#0c1464] pr-px pl-[9px] font-['Open_Sans','Noto_Sans',sans-serif] text-[12px] text-white">
      <svg viewBox="0 0 16 16" className="size-4">
        <rect x="1" y="1" width="14" height="10" fill="#2f86b8" />
        <path d="M1 1h14v4L1 8z" fill="#8fd0ee" />
        <path
          d="M3.5 4v7M6.5 3v10M9.5 5v8M12.5 4v9"
          stroke="#0a1a30"
          strokeWidth="1.6"
        />
        <path
          d="M2.5 12v3M5.5 12v3M8.5 12v3M11.5 12v3M14 11v3"
          stroke="#dfe9f2"
          strokeWidth="1"
        />
      </svg>
      <h1 className="ml-[6px] flex-1 leading-[31px]">
        HWiNFO64 v7.42-5030 Sensor Status [1 value hidden]
      </h1>
      <WindowButton label="Minimieren">
        <path d="M0 5.5h10" />
      </WindowButton>
      <WindowButton label="Maximieren">
        <path d="M.5 .5h9v9h-9z" />
      </WindowButton>
      <WindowButton label="Schließen">
        <path d="M.5 .5l9 9M9.5 .5l-9 9" />
      </WindowButton>
    </header>
  );
}

function WindowButton({
  label,
  children,
}: {
  label: string;
  children: ReactNode;
}) {
  return (
    <button
      type="button"
      aria-label={label}
      className="flex h-full w-[46px] items-center justify-center"
    >
      <svg
        viewBox="0 0 10 10"
        className="size-[10px]"
        fill="none"
        stroke="#fff"
      >
        {children}
      </svg>
    </button>
  );
}

// ── Footer ─────────────────────────────────────────────────────────────────

function ToolButton({
  label,
  className = "border-[#8a8a8a]",
  children,
}: {
  label: string;
  className?: string;
  children: ReactNode;
}) {
  return (
    <button
      type="button"
      aria-label={label}
      className={clsx(
        "flex h-[35px] w-[42px] items-center justify-center border bg-black",
        className,
      )}
    >
      {children}
    </button>
  );
}

function Screen({ x, y }: { x: number; y: number }) {
  return (
    <g transform={`translate(${x} ${y})`}>
      <path d="M5 11h6l1 4H4z" fill="#b9bec4" />
      <ellipse cx="8" cy="15" rx="5" ry="1.5" fill="#e4e7ea" />
      <path d="M0 0 15 1.5 14 12 1 10z" fill="#d4d9de" />
      <path d="M1.2 1.2 13.8 2.5 13 10.8 2 9z" fill="#2b83d6" />
      <path d="M1.2 1.2 13.8 2.5 3 7z" fill="#8cc6f5" />
    </g>
  );
}

function Footer() {
  return (
    <footer className="flex items-start border-t border-[#333] pt-[7px] pr-[10px] pb-[13px]">
      <div className="flex gap-[2px]">
        <ToolButton label="Spalten verbreitern">
          <svg viewBox="0 0 34 20" className="h-5 w-[34px]">
            <g fill="#3f93dd" stroke="#cfe6fa" strokeWidth="1">
              <path d="M1 10 9 2v4h7v8H9v4z" />
              <path d="M33 10 25 2v4h-7v8h7v4z" />
            </g>
          </svg>
        </ToolButton>
        <ToolButton label="Spalten verschmälern">
          <svg viewBox="0 0 34 20" className="h-5 w-[34px]">
            <g fill="#3f93dd" stroke="#cfe6fa" strokeWidth="1">
              <path d="M17 10 9 2v4H2v8h7v4z" />
              <path d="M17 10 25 2v4h7v8h-7v4z" />
            </g>
          </svg>
        </ToolButton>
      </div>

      <div className="ml-auto flex items-center gap-1">
        <ToolButton label="Sensordetails">
          <svg viewBox="0 0 32 32" className="size-8">
            <ellipse cx="19" cy="28.5" rx="8" ry="2.2" fill="#dfe2e5" />
            <path d="M16 23h7l1 6h-9z" fill="#a9aeb4" />
            <path d="M5 2 30 3 28 25 7 23z" fill="#d7dbe0" />
            <path d="M7 4 27.6 5 26 22.6 9 21z" fill="#5b9be8" />
            <path d="M7 4 20 4.600 17 14 8 13z" fill="#10269c" />
            <path d="M21 4.700 27.600 5 26 22.600 18 22z" fill="#a9cdf2" />
            <path d="M14.500 20.500 22 28.500" stroke="#b5562b" strokeWidth="3" />
            <circle
              cx="9"
              cy="15.500"
              r="6.500"
              fill="#8fb9dc"
              fillOpacity=".85"
              stroke="#cddae4"
              strokeWidth="1.800"
            />
          </svg>
        </ToolButton>
        <ToolButton label="Netzwerk" className="ml-[6px] border-[#8a8a8a]">
          <svg viewBox="0 0 32 32" className="size-8">
            <path
              d="M16 7h11v7"
              fill="none"
              stroke="#6f767d"
              strokeWidth="1.200"
            />
            <Screen x={0} y={1} />
            <Screen x={16} y={13} />
          </svg>
        </ToolButton>
        <time className="ml-[22px]">2:41:38</time>
        <ToolButton label="Uhr zurücksetzen">
          <svg viewBox="0 0 32 32" className="size-8">
            <circle cx="16" cy="16" r="15" fill="#fff" />
            <circle
              cx="16"
              cy="16"
              r="12.500"
              fill="none"
              stroke="#111"
              strokeWidth="2.500"
              strokeDasharray="1.400 5.145"
              strokeDashoffset=".7"
            />
            <path
              d="M16 5v12h8"
              fill="none"
              stroke="#000"
              strokeWidth="2.200"
            />
          </svg>
        </ToolButton>
        <ToolButton label="Protokoll starten">
          <svg viewBox="0 0 32 32" className="size-8">
            <path d="M5 2h16l6 6v21H5z" fill="#f1f1f1" stroke="#b4b4b4" />
            <path d="M21 2v6h6z" fill="#c9c9c9" />
            <path
              d="M8 9h13M8 12.500h16M8 16h16M8 19.500h11M8 23h10M8 9v17M12 9v17M17 9v17M8 26h9"
              stroke="#b3b3b3"
            />
            <path
              d="M23.500 19h3.500v4h4v3.500h-4v4h-3.500v-4h-4V23h4z"
              fill="#c3dc8a"
              stroke="#7d9c47"
            />
          </svg>
        </ToolButton>
        <ToolButton label="Einstellungen">
          <svg viewBox="0 0 32 32" className="size-8">
            <g stroke="#cfcfcf" strokeWidth="6.500">
              <path d="M16 1v30M1 16h30M5.400 5.400l21.200 21.200M26.600 5.400 5.400 26.600" />
            </g>
            <circle cx="16" cy="16" r="11.500" fill="#d2d2d2" />
            <circle cx="16" cy="16" r="8" fill="#9a9a9a" />
            <circle cx="16" cy="16" r="6" fill="#050505" />
          </svg>
        </ToolButton>
        <ToolButton label="Schließen" className="border-white">
          <svg viewBox="0 0 32 32" className="size-8">
            <path
              d="M10 4.500 16 10.500 22 4.500 27.500 10 21.500 16 27.500 22 22 27.500 16 21.500 10 27.500 4.500 22 10.500 16 4.500 10z"
              fill="#3c97dd"
              stroke="#1f6fb4"
              strokeLinejoin="round"
            />
          </svg>
        </ToolButton>
      </div>
    </footer>
  );
}

// ── Windows behind ─────────────────────────────────────────────────────────

function Backdrop() {
  return (
    <div className="flex w-5 shrink-0 flex-col overflow-hidden bg-[#37373b] font-['Open_Sans','Noto_Sans',sans-serif] whitespace-nowrap text-[#8d8d92]">
      <div className="h-[30px] bg-[#b4d0e0]" />
      <div className="h-[37px] bg-linear-to-b from-white to-[#c9ccd0]" />
      <div className="h-[33px] bg-[#cfe1ec] pt-[9px] pl-[3px] text-[12px] leading-5 text-black">
        Cor
      </div>
      <div className="h-9 bg-[#b1cfdf] pt-[11px] text-[11px] leading-5 text-[#5d6b75]">
        <span className="-ml-1">New</span>
      </div>
      <div className="h-[162px] bg-linear-to-b from-[#2d2d30] to-[#38383c] pt-[66px] text-[24px] leading-8 font-semibold text-[#cfcfd2]">
        <span className="-ml-[2px]">s</span>
      </div>
      <div className="h-[69px] bg-[#1b1b1c]" />
      <div className="h-[177px] text-[22px] leading-9">
        <p className="-mt-3 -ml-2">o-L</p>
        <p className="-ml-[2px]">wh</p>
      </div>
      <div className="h-[13px] bg-[#2f2f32]" />
      <div className="h-[71px]" />
      <div className="h-[93px] border-t border-[#4c4c50]" />
      <div className="h-[377px] border-t border-[#4c4c50] pt-[10px] text-[18px] leading-[39px]">
        <p className="pl-[6px]">59</p>
        <p className="-ml-[2px]">MS</p>
        <p className="-ml-1">Cue</p>
      </div>
      <div className="h-[14px] bg-[#2b2b2e]" />
      <div className="h-[71px]" />
      <div className="h-[138px] border-t border-[#4c4c50]" />
      <div className="h-[373px] border-t border-[#4c4c50] pt-[14px] text-[20px] leading-8">
        <span className="-ml-[2px]">eu</span>
      </div>
      <div className="h-[128px] bg-[#2b2b2d]" />
      <div className="h-6" />
      <div className="h-[93px] border-t border-[#4c4c50]" />
      <div className="border-t border-[#4c4c50] pt-8 text-[24px] leading-8 text-[#dcdcdc]">
        <span className="-ml-px">ps</span>
      </div>
    </div>
  );
}

// ── Page ───────────────────────────────────────────────────────────────────

export default function App() {
  return (
    <div className="flex min-h-screen bg-black font-['DejaVu_Sans_Condensed','DejaVu_Sans',sans-serif] text-[11px] leading-[17px] whitespace-nowrap text-[#f2f2f2]">
      <div className="flex min-w-0 flex-1 flex-col">
        <TitleBar />
        <div className="flex flex-1 flex-col border-r border-l-2 border-r-[#14196e] border-l-[#0c1464] pr-[2px]">
          <main className="grid flex-1 grid-cols-[538fr_539fr_539fr_539fr]">
            <SensorPanel
              source={SYSTEM}
              className="min-w-0 overflow-hidden border-r-2 border-[#2a2a2a] pt-px"
              tableClassName="-mr-[13px]"
              columns={["w-[90px]", "w-[83px]", "w-[90px]", "w-[99px]", "w-0"]}
              tail="h-1"
            />
            <SensorPanel
              source={CPU}
              className="min-w-0 border-r-2 border-[#2a2a2a]"
              columns={[
                "w-[75px]",
                "w-[75px]",
                "w-[75px]",
                "w-[75px]",
                "w-[4px]",
              ]}
              tail="h-[7px]"
            />
            <SensorPanel
              source={BOARD}
              className="min-w-0 border-r-2 border-[#2a2a2a]"
              columns={[
                "w-[75px]",
                "w-[75px]",
                "w-[75px]",
                "w-[75px]",
                "w-[56px]",
              ]}
              tail="h-[7px]"
            />
            <SensorPanel
              source={GPU}
              className="min-w-0 overflow-hidden"
              tableClassName="-mr-1"
              columns={[
                "w-[75px]",
                "w-[75px]",
                "w-[75px]",
                "w-[75px]",
                "w-0",
              ]}
              tail="h-[415px]"
            />
          </main>
          <Footer />
        </div>
      </div>
      <Backdrop />
    </div>
  );
}
